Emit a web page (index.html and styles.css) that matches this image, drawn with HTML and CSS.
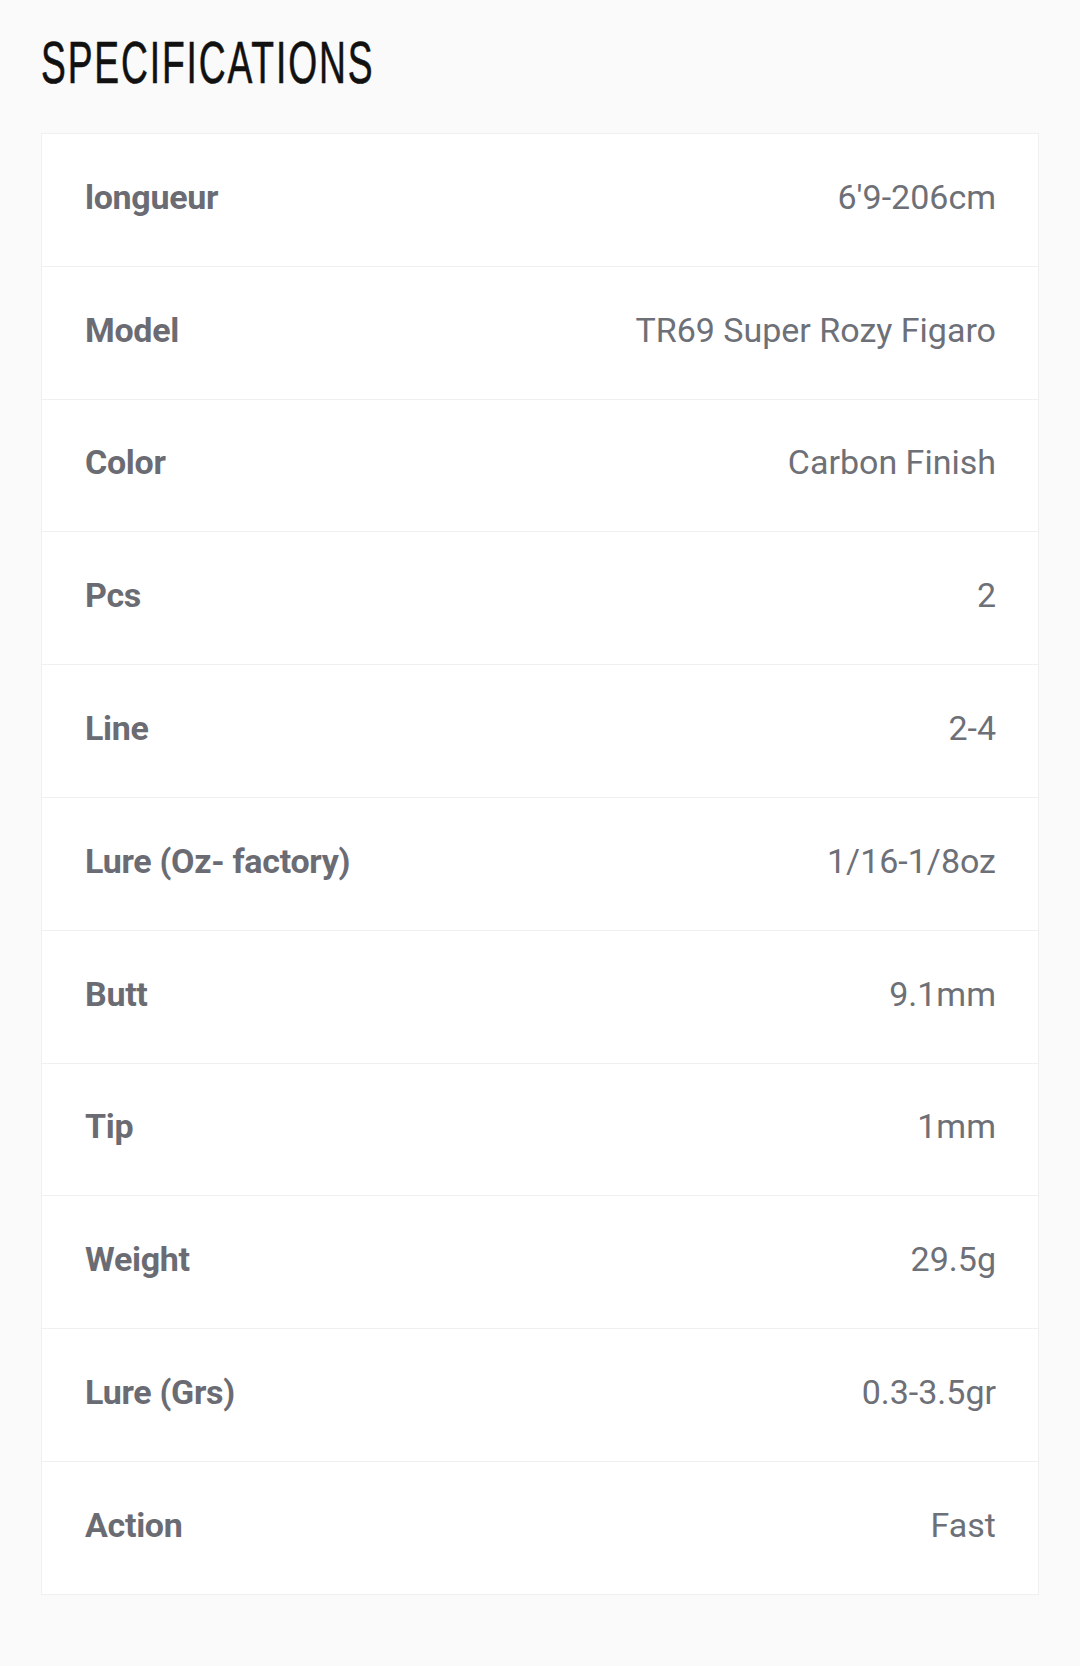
FILE: index.html
```html
<!DOCTYPE html>
<html>
<head>
<meta charset="utf-8">
<link rel="stylesheet" href="styles.css">
</head>
<body>
<div class="page">
  <h2 class="title">SPECIFICATIONS</h2>
  <div class="specs">
    <div class="row"><span class="label">longueur</span><span class="value">6'9-206cm</span></div>
    <div class="row"><span class="label">Model</span><span class="value">TR69 Super Rozy Figaro</span></div>
    <div class="row"><span class="label">Color</span><span class="value">Carbon Finish</span></div>
    <div class="row"><span class="label">Pcs</span><span class="value">2</span></div>
    <div class="row"><span class="label">Line</span><span class="value">2-4</span></div>
    <div class="row"><span class="label">Lure (Oz- factory)</span><span class="value">1/16-1/8oz</span></div>
    <div class="row"><span class="label">Butt</span><span class="value">9.1mm</span></div>
    <div class="row"><span class="label">Tip</span><span class="value">1mm</span></div>
    <div class="row"><span class="label">Weight</span><span class="value">29.5g</span></div>
    <div class="row"><span class="label">Lure (Grs)</span><span class="value">0.3-3.5gr</span></div>
    <div class="row"><span class="label">Action</span><span class="value">Fast</span></div>
  </div>
</div>
</body>
</html>
```
FILE: styles.css
```css
html, body {
  margin: 0;
  padding: 0;
  background: #fafafa;
}
.page {
  padding: 28px 41px 60px 41px;
  font-family: Roboto, "Liberation Sans", sans-serif;
}
.title {
  margin: 0 0 35px 0;
  font-family: "Liberation Sans Narrow", "Liberation Sans", sans-serif;
  font-weight: 400;
  font-size: 60px;
  line-height: 70px;
  letter-spacing: 3px;
  color: #111;
  -webkit-text-stroke: 0.6px #111;
  transform: scaleX(0.62);
  transform-origin: left center;
}
.specs {
  background: #fff;
  border: 1px solid #f0f0f0;
}
.row {
  display: flex;
  justify-content: space-between;
  align-items: center;
  height: 132.8px;
  box-sizing: border-box;
  padding: 0 42px 6px 43px;
  border-top: 1px solid #f0f0f0;
}
.row:first-child {
  border-top: none;
  height: 131.8px;
}
.label {
  font-weight: 700;
  font-size: 34px;
  color: #6b6c73;
  letter-spacing: -0.3px;
}
.value {
  font-weight: 400;
  font-size: 34px;
  color: #6e7078;
}
```
